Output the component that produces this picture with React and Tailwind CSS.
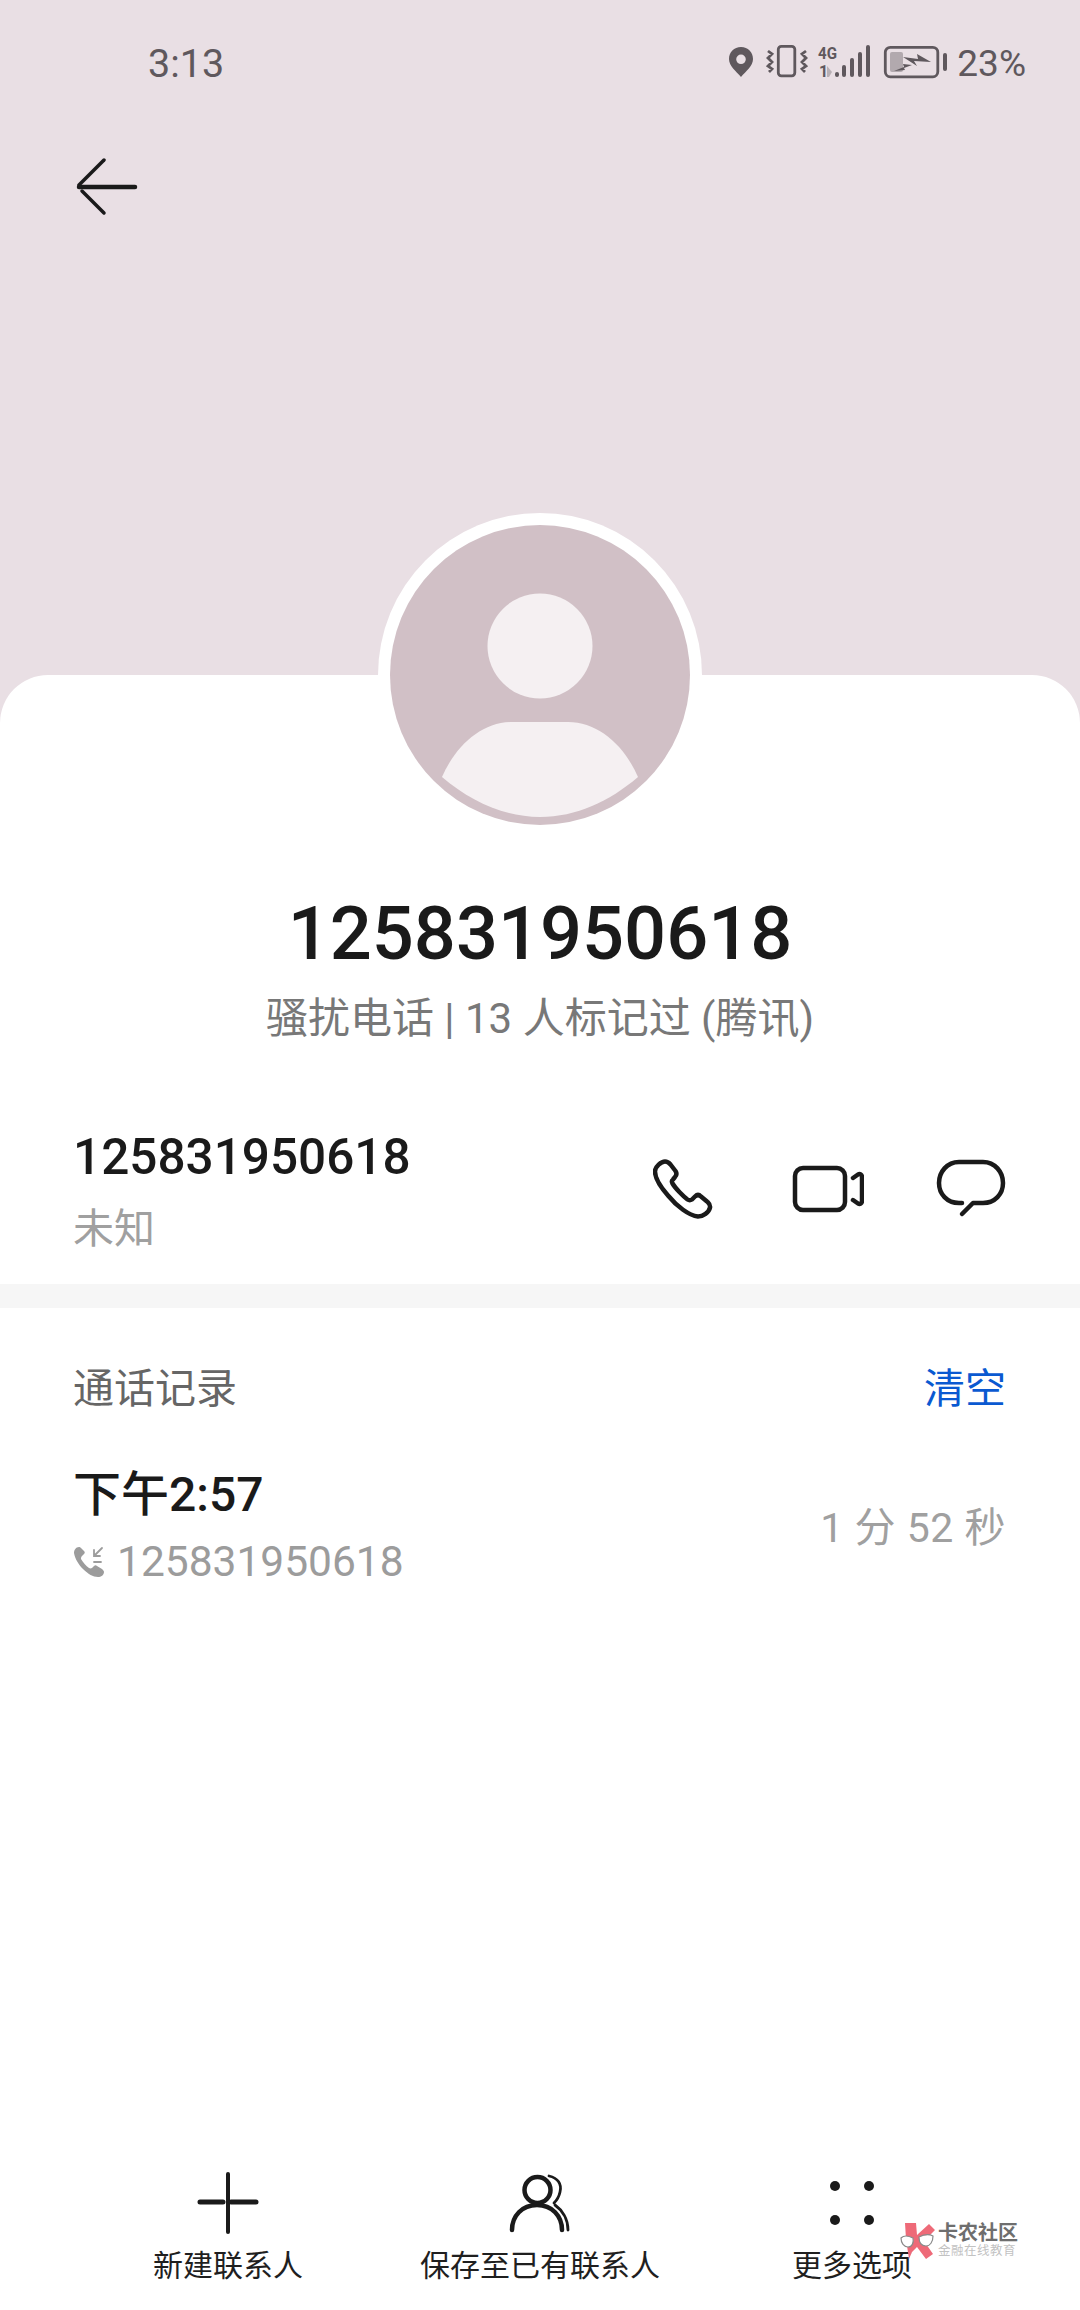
const font = "font-['Roboto','Noto_Sans_CJK_SC',sans-serif]";

function StatusIcons() {
  return (
    <svg width="222" height="40" viewBox="0 0 222 40" className="text-[#5f585d]" fill="currentColor">
      {/* pin */}
      <path fillRule="evenodd" d="M14 3C7 3 2 8 2 15c0 7 7 12 12 18 5-6 12-11 12-18C26 8 21 3 14 3Zm0 7.500a4.800 4.800 0 1 1 0 9.600 4.800 4.800 0 0 1 0-9.600Z" />
      {/* vibrate */}
      <rect x="51.300" y="2.300" width="16.500" height="29.500" rx="3" fill="none" stroke="currentColor" strokeWidth="2.800" />
      <path d="M41 7l4 3-4 4 4 4-4 4 4 3-3 3M79 7l-4 3 4 4-4 4 4 4-4 3 3 3" fill="none" stroke="currentColor" strokeWidth="2.800" />
      {/* network */}
      <text x="91" y="15" fontSize="17" fontWeight="700" fontFamily="Roboto" textLength="19" lengthAdjust="spacingAndGlyphs">4G</text>
      <text x="92" y="33" fontSize="16" fontWeight="700" fontFamily="Roboto">1</text>
      <path d="M100 33V22l5 6-3 5Z" opacity="0.35" />
      <rect x="108" y="28" width="4" height="5" rx="2" />
      <rect x="115" y="21" width="4" height="12" rx="2" />
      <rect x="123" y="14" width="4" height="19" rx="2" />
      <rect x="131" y="8" width="4" height="25" rx="2" />
      <rect x="139" y="1" width="4" height="32" rx="2" />
      {/* battery */}
      <rect x="158.300" y="3.300" width="52.500" height="29.500" rx="5" fill="none" stroke="currentColor" strokeWidth="2.800" />
      <rect x="163" y="8" width="13" height="20" rx="2" opacity="0.4" />
      <rect x="216" y="9" width="4" height="18" rx="2" />
      <path d="M176 13l15 2-1-5 14 8-17-1 3 5ZM167 27l10-4-1-3 9 1-8 3 1 2Z" />
    </svg>
  );
}

function BackArrow() {
  return (
    <svg width="64" height="58" viewBox="0 0 64 58" fill="none" stroke="#1a1a1a" strokeLinecap="round">
      <path d="M4 27 29 2" strokeWidth="3.500" />
      <path d="M7 33 29 55" strokeWidth="3.500" />
      <path d="M4 29h56" strokeWidth="4.500" />
    </svg>
  );
}

function PhoneIcon() {
  return (
    <svg width="60" height="60" viewBox="0 0 60 60" fill="none" stroke="#1a1a1a" strokeWidth="4.500" strokeLinejoin="round">
      <path d="M12 2.500c-3.600 0-10 5-10 10 0 6 5 15 13 24 9 11 21 20 30 21 5 0 11-4 12-9 .6-3-1-4-3-6l-6-5c-2-2-4-2-6 0l-3 3c-1.500 1-3 1-4.500 0-4-3-12-11-15-16-1-2-1-3 .5-4l2-2.500c2-2 2-3.500 .5-6l-5-6.500c-2-2.300-3-3-5.500-3Z" />
    </svg>
  );
}

function VideoIcon() {
  return (
    <svg width="74" height="48" viewBox="0 0 74 48" fill="none" stroke="#1a1a1a" strokeWidth="4.500">
      <rect x="5" y="3" width="50" height="42" rx="8" />
      <path d="M63 13l5-3.500c2-1 4 0 4 2.500v24c0 2.500-2 3.500-4 2.500l-5-3.500" strokeLinecap="round" strokeLinejoin="round" />
    </svg>
  );
}

function ChatIcon() {
  return (
    <svg width="70" height="60" viewBox="0 0 70 60" fill="none" stroke="#1a1a1a" strokeWidth="4.500" strokeLinecap="round" strokeLinejoin="round">
      <path d="M26 44H23C11 44 3 35 3 24S11 3 23 3h24c12 0 20 10 20 21s-8 20-20 20H37L26 55" />
    </svg>
  );
}

function MissedIcon() {
  return (
    <svg width="32" height="32" viewBox="0 0 32 32" fill="#9c9c9c">
      <path d="M6 1C3 1 1 4 1 7c1 6 5 12 9 16 5 5 10 8 15 8 3 0 6-2 6-5 0-1-1-2-2-3l-5-3c-1-1-2-1-3 0l-2 2c-1 .5-2 .5-3 0-3-2-6-6-8-9 0-1 0-2 1-3l2-2c1-1 1-2 0-3L8 2C7 1 7 1 6 1Z" />
      <path d="M29 2 21 10M21 4v6h6M21 16h7" fill="none" stroke="#9c9c9c" strokeWidth="1.800" strokeLinecap="round" />
    </svg>
  );
}

function PlusIcon() {
  return (
    <svg width="62" height="62" viewBox="0 0 62 62" fill="none" stroke="#1a1a1a" strokeLinecap="round">
      <path d="M31 2v58" strokeWidth="4" />
      <path d="M3 30h23M34 30h25" strokeWidth="5" />
    </svg>
  );
}

function PersonIcon() {
  return (
    <svg width="64" height="62" viewBox="0 0 64 62" fill="none" stroke="#1a1a1a" strokeLinecap="round">
      <circle cx="29.500" cy="18" r="13" strokeWidth="4.500" />
      <path d="M4 58C4 44 14 33 29 33s25 11 25 25" strokeWidth="4.500" />
      <path d="M41 4c9 2 13 8 11 16-1 5-3 8-6 11M47 33c7 5 13 14 13 25" strokeWidth="2.800" />
    </svg>
  );
}

function DotsIcon() {
  return (
    <svg width="46" height="46" viewBox="0 0 46 46" fill="#1a1a1a">
      <circle cx="6" cy="6" r="5" />
      <circle cx="40" cy="6" r="5" />
      <circle cx="6" cy="40" r="5" />
      <circle cx="40" cy="40" r="5" />
    </svg>
  );
}

function Watermark() {
  return (
    <div className="absolute left-[900px] top-[2223px] flex items-start gap-[2px]">
      <svg width="36" height="36" viewBox="0 0 36 36">
        <path d="M5 0h11l1 12L29 1l6 6-11 11 9 13-7 5-9-12-5 5L9 36 6 16Z" fill="#ee6a78" />
        <path d="M1 15c3-3 8-2 12 0 1 5-1 9-5 9-4 0-7-4-7-9ZM19 14c4-2 10-3 14-1 0 6-3 10-7 10-5 0-7-4-7-9Z" fill="#ffffff" stroke="#8a8a8a" strokeWidth="1.200" />
      </svg>
      <div className="flex flex-col">
        <span className="text-[20px] leading-[20px] font-bold text-[#6e6e6e] whitespace-nowrap">卡农社区</span>
        <span className="text-[12.500px] leading-[14px] mt-[1px] tracking-[0.500px] text-[#c2c2c2] whitespace-nowrap">金融在线教育</span>
      </div>
    </div>
  );
}

function Action({ icon, label }) {
  return (
    <div className="flex flex-col items-center">
      <div className="flex items-center justify-center h-[72px] pb-[14px]">{icon}</div>
      <span className="text-[30px] leading-[40px] text-[#1f1f1f] whitespace-nowrap">{label}</span>
    </div>
  );
}

export default function App() {
  return (
    <div className={`relative w-[1080px] h-[2310px] overflow-hidden flex flex-col bg-[#e9dfe4] ${font}`}>
      <header className="h-[675px] shrink-0">
        <div className="flex items-center justify-between pt-[41px] pl-[148px] pr-[54px]">
          <span className="text-[39.500px] leading-[46px] text-[#5f585d]">3:13</span>
          <div className="flex items-center gap-[8px]">
            <StatusIcons />
            <span className="text-[37px] leading-[46px] text-[#5f585d]">23%</span>
          </div>
        </div>
        <div className="pl-[75px] pt-[71px]">
          <BackArrow />
        </div>
      </header>

      <main className="relative flex-1 flex flex-col bg-white rounded-t-[48px]">
        {/* avatar straddles the card edge */}
        <div className="absolute left-[378px] -top-[162px] w-[324px] h-[324px] rounded-full bg-white flex items-center justify-center">
          <svg width="300" height="300" viewBox="0 0 300 300">
            <circle cx="150" cy="150" r="150" fill="#d1c0c6" />
            <circle cx="150" cy="121" r="52.500" fill="#f5f0f2" />
            <path d="M52 252C66 220 92 197 122 197h56c30 0 56 23 70 55-28 24-62 40-98 40s-70-16-98-40Z" fill="#f5f0f2" />
          </svg>
        </div>

        <div className="pt-[217px] flex flex-col items-center">
          <h1 className="text-[74px] leading-[84px] font-medium text-[#1a1a1a]">125831950618</h1>
          <p className="text-[42px] leading-[56px] mt-[15px] text-[#787878]">骚扰电话 | 13 人标记过 (腾讯)</p>
        </div>

        <section className="mt-[53px] pl-[73px] pr-[74px] flex items-center justify-between h-[184px]">
          <div className="flex flex-col">
            <span className="text-[49.500px] leading-[60px] font-medium text-[#1a1a1a]">125831950618</span>
            <span className="text-[41px] leading-[56px] mt-[14px] text-[#a0a0a0]">未知</span>
          </div>
          <div className="flex items-center -mt-[6px]">
            <PhoneIcon />
            <div className="ml-[77px]"><VideoIcon /></div>
            <div className="ml-[72px]"><ChatIcon /></div>
          </div>
        </section>

        <div className="h-[24px] bg-[#f6f6f6]" />

        <section className="pl-[73px] pr-[74px]">
          <div className="flex items-center justify-between h-[56px] mt-[54px]">
            <span className="text-[41px] text-[#666666]">通话记录</span>
            <span className="text-[41px] text-[#0a59d1]">清空</span>
          </div>
          <div className="flex items-center justify-between mt-[47px]">
            <div className="flex flex-col">
              <span className="text-[48px] leading-[60px] font-medium text-[#1a1a1a]">下午2:57</span>
              <div className="flex items-center gap-[12px] mt-[9px]">
                <MissedIcon />
                <span className="text-[42.500px] leading-[56px] text-[#9c9c9c]">125831950618</span>
              </div>
            </div>
            <span className="text-[41px] leading-[56px] tracking-[0.500px] text-[#a0a0a0]">1 分 52 秒</span>
          </div>
        </section>

        <nav className="mt-auto mb-[24px] px-[72px] grid grid-cols-3">
          <Action icon={<PlusIcon />} label="新建联系人" />
          <Action icon={<PersonIcon />} label="保存至已有联系人" />
          <Action icon={<DotsIcon />} label="更多选项" />
        </nav>
      </main>

      <Watermark />
    </div>
  );
}
